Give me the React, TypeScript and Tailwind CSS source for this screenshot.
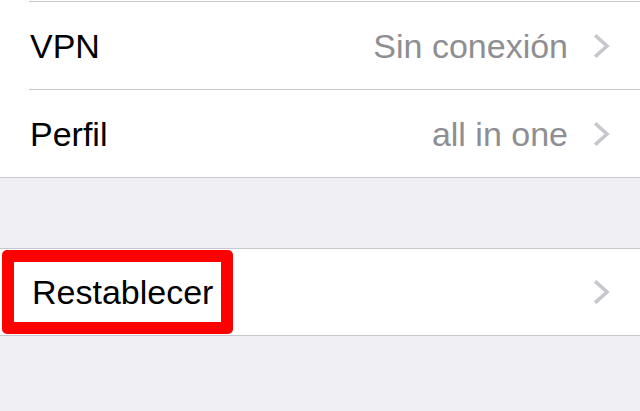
import React from 'react';

function Chevron() {
  return (
    <svg width="16" height="24" viewBox="0 0 16 24" className="shrink-0">
      <polyline points="2.5,2.5 13,12 2.5,21.5" fill="none" stroke="#c7c7cc" strokeWidth="3.6" strokeLinecap="square" strokeLinejoin="miter" />
    </svg>
  );
}

function Row({ label, value, inset }: { label: string; value?: string; inset?: boolean }) {
  return (
    <div className={inset ? 'pl-[29px]' : ''}>
      <div className={`flex h-[88px] items-center pr-[30px] ${inset ? 'border-t border-[#c8c7cc] pl-px' : 'pl-[30px]'}`}>
        <span className="text-[34px] leading-none text-black">{label}</span>
        <span className="ml-auto text-[34px] leading-none text-[#8e8e93]">{value}</span>
        <span className="ml-[26px]">
          <Chevron />
        </span>
      </div>
    </div>
  );
}

export default function App() {
  return (
    <div className="h-[411px] w-[640px] overflow-hidden bg-[#efeff4] font-['Liberation_Sans',Arial,sans-serif]">
      <div className="border-b border-[#c8c7cc] bg-white">
        <div className="h-px" />
        <Row label="VPN" value="Sin conexión" inset />
        <Row label="Perfil" value="all in one" inset />
      </div>

      <div className="h-[70px]" />

      <div className="relative border-y border-[#c8c7cc] bg-white">
        <div className="flex h-[86px] items-center pl-[32px] pr-[30px]">
          <span className="text-[34px] leading-none text-black">Restablecer</span>
          <span className="ml-auto">
            <Chevron />
          </span>
        </div>
        <div className="pointer-events-none absolute left-[2px] top-[1px] h-[84px] w-[231px] rounded-[5px] border-[12px] border-[#ff0000]" />
      </div>
    </div>
  );
}
